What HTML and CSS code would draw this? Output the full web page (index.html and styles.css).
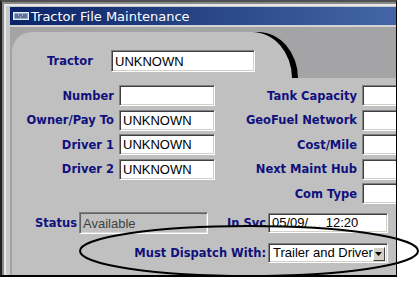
FILE: index.html
```html
<!DOCTYPE html>
<html lang="en">
<head>
    <meta charset="UTF-8">
    <title>Tractor File Maintenance</title>
    <link rel="stylesheet" href="styles.css">
</head>
<body>
    <div class="window">
        <div class="titlebar">
            <svg class="app-icon" width="16" height="8" viewBox="0 0 16 8">
                <rect x="0.5" y="0.5" width="15" height="7" fill="#9aa8c8" stroke="#e8ecf4"/>
                <path d="M2 3h3M6 3h3M10 3h4M2 5h5M8 5h6" stroke="#24346c" stroke-width="1"/>
            </svg>
            <span class="title">Tractor File Maintenance</span>
        </div>
        <div class="client">
            <div class="tab">
                <label class="lbl tractor">Tractor</label>
                <div class="field tractor-field">UNKNOWN</div>
            </div>
            <div class="panel">
                <div class="grid">
                    <label class="lbl">Number</label>
                    <div class="field"></div>
                    <label class="lbl">Tank Capacity</label>
                    <div class="field"></div>

                    <label class="lbl">Owner/Pay To</label>
                    <div class="field">UNKNOWN</div>
                    <label class="lbl">GeoFuel Network</label>
                    <div class="field"></div>

                    <label class="lbl">Driver 1</label>
                    <div class="field">UNKNOWN</div>
                    <label class="lbl">Cost/Mile</label>
                    <div class="field"></div>

                    <label class="lbl">Driver 2</label>
                    <div class="field">UNKNOWN</div>
                    <label class="lbl">Next Maint Hub</label>
                    <div class="field"></div>

                    <span></span>
                    <span></span>
                    <label class="lbl">Com Type</label>
                    <div class="field"></div>
                </div>
                <div class="status-row">
                    <label class="lbl status-lbl">Status</label>
                    <div class="field disabled status-field">Available</div>
                    <label class="lbl svc-lbl">In Svc</label>
                    <div class="field svc-field">05/09/<span class="blur">&#8230;</span> 12:20</div>
                </div>
                <div class="dispatch-row">
                    <label class="lbl dispatch-lbl">Must Dispatch With:</label>
                    <div class="field select">
                        <span>Trailer and Driver</span>
                        <span class="drop"><svg width="7" height="4" viewBox="0 0 7 4"><path d="M0 0h7L3.5 4z" fill="#000"/></svg></span>
                    </div>
                </div>
            </div>
        </div>
    </div>
    <svg class="oval" width="419" height="283" viewBox="0 0 419 283">
        <ellipse cx="249" cy="251" rx="169" ry="25" fill="none" stroke="#000" stroke-width="2"/>
    </svg>
</body>
</html>
```

FILE: styles.css
```css
body {
    margin: 0;
    background: #fff;
    width: 419px;
    height: 283px;
    position: relative;
    overflow: hidden;
}
.window {
    box-sizing: border-box;
    width: 397px;
    height: 277px;
    background: #c8c8c8;
    border-top: 2px solid #505050;
    border-left: 2px solid #202020;
    border-right: 1px solid #000;
    border-bottom: 2px solid #000;
    padding: 5px 0 0 8px;
    display: flex;
    flex-direction: column;
    box-shadow: inset 2px 2px 0 #888, inset 4px 4px 0 #e8e8e8;
}
.titlebar {
    height: 18px;
    background: linear-gradient(to right, #0a2468, #4466a6);
    display: flex;
    align-items: center;
    gap: 2px;
    padding-left: 3px;
}
.app-icon {
    display: block;
}
.title {
    font-family: "DejaVu Sans", sans-serif;
    font-size: 13px;
    color: #fff;
}
.client {
    flex: 1;
    background: #a4a4a6;
    border-top: 2px solid #d4d4d4;
    padding: 5px 0 0 2px;
    display: flex;
    flex-direction: column;
    overflow: hidden;
}
.tab {
    width: 280px;
    height: 46px;
    box-sizing: border-box;
    background: #c0c0c0;
    border-radius: 20px 40px 0 0 / 20px 46px 0 0;
    box-shadow: 6px 0 0 #000;
    padding: 11px 0 0 35px;
    display: flex;
    align-items: center;
    align-self: flex-start;
}
.lbl {
    font-family: "DejaVu Sans", sans-serif;
    font-weight: bold;
    font-size: 11.5px;
    color: #10107c;
    text-align: right;
    white-space: nowrap;
}
.tractor {
    width: 64px;
    text-align: left;
}
.field {
    box-sizing: border-box;
    height: 21px;
    background: #fff;
    border-top: 1px solid #808080;
    border-left: 1px solid #808080;
    border-right: 1px solid #fff;
    border-bottom: 1px solid #fff;
    box-shadow: inset 1px 1px 0 #404040, inset -1px -1px 0 #d4d0c8;
    font-family: "Liberation Sans", Arial, sans-serif;
    font-size: 13px;
    color: #000;
    padding: 2px 0 0 3px;
    white-space: nowrap;
    overflow: hidden;
}
.tractor-field {
    width: 144px;
    height: 22px;
    padding-top: 3px;
}
.panel {
    flex: 1;
    background: #c0c0c0;
    padding-top: 7px;
}
.grid {
    display: grid;
    grid-template-columns: 102px 96px 137px 60px;
    grid-auto-rows: 21px;
    column-gap: 5px;
    row-gap: 3.5px;
    align-items: center;
}
.status-row,
.dispatch-row {
    display: flex;
    align-items: center;
}
.status-row {
    height: 22px;
    margin-top: 8px;
}
.status-lbl {
    width: 65px;
}
.disabled {
    background: #c0c0c0;
    color: #404040;
    box-shadow: inset 1px 1px 0 #606060, inset -1px -1px 0 #d8d8d8;
}
.status-field {
    width: 129px;
    height: 22px;
    margin-left: 2px;
    padding-top: 3px;
}
.svc-lbl {
    width: 58px;
}
.svc-field {
    width: 120px;
    height: 20px;
    margin-left: 2px;
    padding-top: 1px;
}
.blur {
    color: #d0d0d0;
    letter-spacing: 1px;
}
.dispatch-row {
    margin-top: 9px;
}
.dispatch-lbl {
    width: 254px;
}
.select {
    width: 120px;
    height: 20px;
    margin-left: 2px;
    padding: 1px 2px 0 4px;
    display: flex;
    justify-content: space-between;
    align-items: flex-start;
}
.drop {
    width: 14px;
    height: 14px;
    margin-top: 2px;
    box-sizing: border-box;
    background: #d4d0c8;
    border-top: 1px solid #fff;
    border-left: 1px solid #fff;
    border-right: 1px solid #404040;
    border-bottom: 1px solid #404040;
    display: flex;
    align-items: center;
    justify-content: center;
}
.drop svg {
    display: block;
}
.oval {
    position: absolute;
    left: 0;
    top: 0;
}
```
